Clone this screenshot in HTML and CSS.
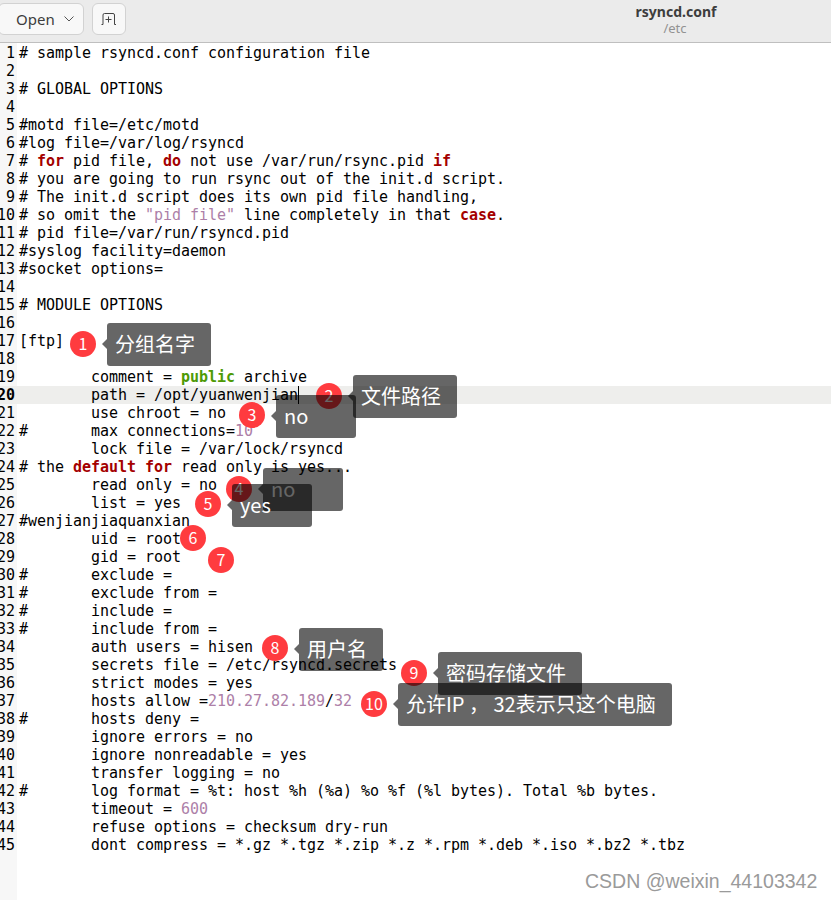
FILE: index.html
```html
<!DOCTYPE html>
<html lang="en">
<head>
<meta charset="utf-8">
<title>rsyncd.conf</title>
<link rel="stylesheet" href="styles.css">
</head>
<body>
<div class="window">
  <header class="header">
    <div class="actions">
      <button class="btn btn-open"><span>Open</span>
        <svg class="chev" width="10" height="6" viewBox="0 0 10 6"><path d="M.5.5 5 5 9.500.5" fill="none" stroke="#555" stroke-width="1"/></svg>
      </button>
      <button class="btn btn-new" aria-label="New tab">
        <svg width="16" height="12" viewBox="0 0 16 12"><path d="M.5 11.500h1.500V2Q2 .5 3.500 .5h8.500Q13.500 .5 13.500 2v9.500h1.500M4.500 6.500h6M7.500 3.500v6" fill="none" stroke="#444" stroke-width="1"/></svg>
      </button>
    </div>
    <div class="title">
      <div class="name">rsyncd.conf</div>
      <div class="path">/etc</div>
    </div>
  </header>
  <main class="editor">
    <div class="gutter">
      <div class="n">1</div><div class="n">2</div><div class="n">3</div><div class="n">4</div><div class="n">5</div><div class="n">6</div><div class="n">7</div><div class="n">8</div><div class="n">9</div><div class="n">10</div><div class="n">11</div><div class="n">12</div><div class="n">13</div><div class="n">14</div><div class="n">15</div><div class="n">16</div><div class="n">17</div><div class="n">18</div><div class="n">19</div><div class="n cur">20</div><div class="n">21</div><div class="n">22</div><div class="n">23</div><div class="n">24</div><div class="n">25</div><div class="n">26</div><div class="n">27</div><div class="n">28</div><div class="n">29</div><div class="n">30</div><div class="n">31</div><div class="n">32</div><div class="n">33</div><div class="n">34</div><div class="n">35</div><div class="n">36</div><div class="n">37</div><div class="n">38</div><div class="n">39</div><div class="n">40</div><div class="n">41</div><div class="n">42</div><div class="n">43</div><div class="n">44</div><div class="n">45</div>
    </div>
    <div class="code">
<div class="l"># sample rsyncd.conf configuration file</div>
<div class="l"> </div>
<div class="l"># GLOBAL OPTIONS</div>
<div class="l"> </div>
<div class="l">#motd file=/etc/motd</div>
<div class="l">#log file=/var/log/rsyncd</div>
<div class="l"># <b class="k">for</b> pid file, <b class="k">do</b> not use /var/run/rsync.pid <b class="k">if</b></div>
<div class="l"># you are going to run rsync out of the init.d script.</div>
<div class="l"># The init.d script does its own pid file handling,</div>
<div class="l"># so omit the <span class="s">"pid file"</span> line completely in that <b class="k">case</b>.</div>
<div class="l"># pid file=/var/run/rsyncd.pid</div>
<div class="l">#syslog facility=daemon</div>
<div class="l">#socket options=</div>
<div class="l"> </div>
<div class="l"># MODULE OPTIONS</div>
<div class="l"> </div>
<div class="l">[ftp]</div>
<div class="l"> </div>
<div class="l">        comment = <b class="t">public</b> archive</div>
<div class="l cur">        path = /opt/yuanwenjian<span class="caret"></span></div>
<div class="l">        use chroot = no</div>
<div class="l">#       max connections=<span class="s">10</span></div>
<div class="l">        lock file = /var/lock/rsyncd</div>
<div class="l"># the <b class="k">default</b> <b class="k">for</b> read only is yes...</div>
<div class="l">        read only = no</div>
<div class="l">        list = yes</div>
<div class="l">#wenjianjiaquanxian</div>
<div class="l">        uid = root</div>
<div class="l">        gid = root</div>
<div class="l">#       exclude =</div>
<div class="l">#       exclude from =</div>
<div class="l">#       include =</div>
<div class="l">#       include from =</div>
<div class="l">        auth users = hisen</div>
<div class="l">        secrets file = /etc/rsyncd.secrets</div>
<div class="l">        strict modes = yes</div>
<div class="l">        hosts allow =<span class="s">210.27.82.189</span>/<span class="s">32</span></div>
<div class="l">#       hosts deny =</div>
<div class="l">        ignore errors = no</div>
<div class="l">        ignore nonreadable = yes</div>
<div class="l">        transfer logging = no</div>
<div class="l">#       log format = %t: host %h (%a) %o %f (%l bytes). Total %b bytes.</div>
<div class="l">        timeout = <span class="s">600</span></div>
<div class="l">        refuse options = checksum dry-run</div>
<div class="l">        dont compress = *.gz *.tgz *.zip *.z *.rpm *.deb *.iso *.bz2 *.tbz</div>
    </div>
  </main>
  <div class="notes">
    <div class="dot d1">1</div><div class="tip t1">分组名字</div>
    <div class="dot d2">2</div><div class="tip t2">文件路径</div>
    <div class="dot d3">3</div><div class="tip t3">no</div>
    <div class="dot d4">4</div><div class="tip t4">no</div>
    <div class="dot d5">5</div><div class="tip t5">yes</div>
    <div class="dot d6">6</div>
    <div class="dot d7">7</div>
    <div class="dot d8">8</div><div class="tip t8">用户名</div>
    <div class="dot d9">9</div><div class="tip t9">密码存储文件</div>
    <div class="dot d10">10</div><div class="tip t10">允许IP ， 32表示只这个电脑</div>
  </div>
  <div class="mark">CSDN @weixin_44103342</div>
</div>
</body>
</html>
```
FILE: styles.css
```css
* { box-sizing: border-box; }
html, body { margin: 0; padding: 0; }
body { width: 831px; height: 900px; overflow: hidden; background: #fff; }
.window { position: relative; width: 831px; height: 900px; overflow: hidden; display: flex; flex-direction: column; }

.header { height: 43px; flex: none; background: #ebebeb; border-bottom: 1px solid #bfbfbf; position: relative; display: flex; }
.actions { display: flex; gap: 8px; padding-top: 3px; margin-left: -2px; align-items: flex-start; }
.btn { height: 32px; background: #f8f8f8; border: 1px solid #d2d2d2; border-radius: 6px; display: flex; align-items: center; justify-content: center; padding: 0; color: #3d3d3d; font: 15px "Noto Sans", sans-serif; }
.btn-open { width: 86px; gap: 9px; justify-content: flex-start; padding-left: 17px; }
.btn-new { width: 34px; }
.title { position: absolute; left: 596px; width: 160px; top: 3px; text-align: center; font-family: "Noto Sans", sans-serif; }
.name { font-size: 14px; font-weight: 700; line-height: 18px; color: #3d3d3d; }
.path { font-size: 13px; line-height: 17px; margin: -1px 2px 0 0; color: #929292; }

.editor { flex: none; display: flex; padding-top: 1px; font: 15px/19px "DejaVu Sans Mono", monospace; letter-spacing: -0.03px; color: #000; height: 857px; }
.gutter { width: 17px; flex: none; background: #f7f7f7; color: #000; overflow: hidden; height: 857px; margin-top: -1px; padding-top: 1px; }
.n { display: flex; justify-content: flex-end; height: 18px; padding-right: 2px; }
.n.cur { font-weight: 700; background: #eeeeec; }
.code { flex: 1; padding-left: 2px; min-width: 0; }
.l { height: 18px; white-space: pre; }
.l.cur { background: #eeeeec; margin-left: -2px; padding-left: 2px; }
.k { color: #a40000; font-weight: 700; }
.t { color: #4e9a06; font-weight: 700; }
.s { color: #ad7fa8; }
.caret { display: inline-block; width: 1px; height: 18px; background: #000; vertical-align: top; }

.notes { position: absolute; inset: 0; pointer-events: none; font-family: "Noto Sans CJK SC", "Noto Sans", sans-serif; }
.dot { position: absolute; width: 26px; height: 26px; border-radius: 50%; background: #ff3b3f; color: #fff; font-size: 16px; line-height: 25px; text-align: center; }
.d1 { left: 70px; top: 331px; }
.d2 { left: 316px; top: 383px; }
.d3 { left: 239px; top: 402px; }
.d4 { left: 226px; top: 476px; }
.d5 { left: 195px; top: 491px; }
.d6 { left: 180px; top: 525px; }
.d7 { left: 208px; top: 547px; }
.d8 { left: 262px; top: 635px; }
.d9 { left: 401px; top: 660px; }
.d10 { left: 361px; top: 691px; }

.tip { position: absolute; height: 43px; min-width: 80px; padding: 0 16px 0 8px; border-radius: 3px; background: rgba(0,0,0,.6); color: #fff; font-size: 20px; line-height: 42px; white-space: pre; }
.tip::before { content: ""; position: absolute; left: -5px; top: 16px; border: 5px solid transparent; border-left: 0; border-right-color: rgba(0,0,0,.6); }
.t1 { left: 107px; top: 323px; }
.t2 { left: 353px; top: 375px; }
.t3 { left: 276px; top: 395px; }
.t4 { left: 263px; top: 468px; }
.t5 { left: 232px; top: 484px; }
.t8 { left: 299px; top: 628px; }
.t9 { left: 438px; top: 652px; }
.t10 { left: 398px; top: 683px; }

.mark { position: absolute; left: 585px; top: 871px; font: 19.5px/20px "Liberation Sans", sans-serif; color: #9a9a9a; white-space: nowrap; }
```
